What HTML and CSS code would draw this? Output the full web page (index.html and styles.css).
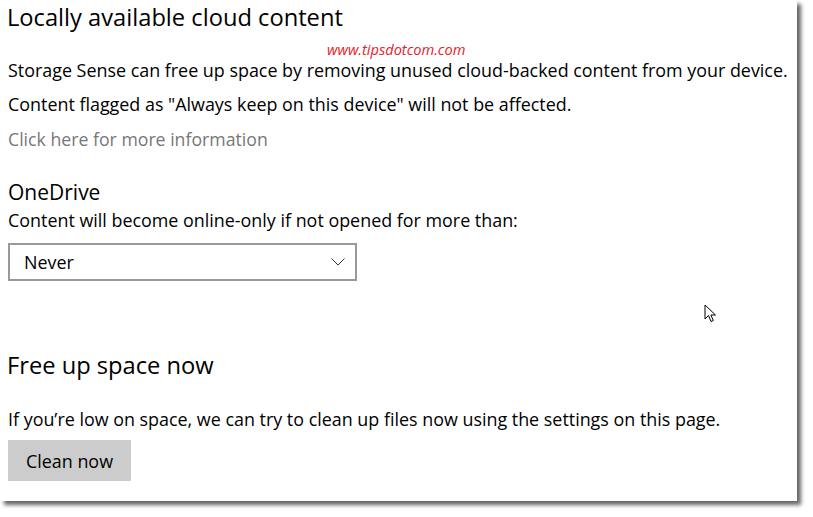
FILE: index.html
```html
<!DOCTYPE html>
<html lang="en">
<head>
<meta charset="utf-8">
<title>Storage Sense</title>
<link rel="stylesheet" href="styles.css">
</head>
<body>
<div class="panel">
  <h2 class="title">Locally available cloud content</h2>
  <div class="watermark">www.tipsdotcom.com</div>
  <p class="text t1">Storage Sense can free up space by removing unused cloud-backed content from your device.</p>
  <p class="text t2">Content flagged as "Always keep on this device" will not be affected.</p>
  <a class="link">Click here for more information</a>
  <h3 class="sub">OneDrive</h3>
  <p class="text t3">Content will become online-only if not opened for more than:</p>
  <div class="select">
    <span class="select-value">Never</span>
    <svg class="chevron" width="14" height="8" viewBox="0 0 14 8"><path d="M0.5 0.5 L7 7 L13.5 0.5" fill="none" stroke="#333" stroke-width="1"/></svg>
  </div>
  <svg class="cursor" width="14" height="19" viewBox="0 0 14 19"><path d="M1 1 L1 15 L4.5 11.5 L7 17.5 L9.3 16.5 L6.9 11 L11.5 11 Z" fill="#fff" stroke="#000" stroke-width="1" stroke-linejoin="miter"/></svg>
  <h2 class="title t-free">Free up space now</h2>
  <p class="text t4">If you’re low on space, we can try to clean up files now using the settings on this page.</p>
  <button class="btn">Clean now</button>
</div>
</body>
</html>
```

FILE: styles.css
```css
html, body {
  margin: 0;
  padding: 0;
  background: #fff;
}
body {
  width: 813px;
  height: 517px;
  overflow: hidden;
  font-family: "Open Sans", "Noto Sans", sans-serif;
  color: #000;
}
.panel {
  position: relative;
  width: 797px;
  height: 501px;
  box-sizing: border-box;
  padding-left: 8px;
  background: #fff;
  box-shadow: 4px 4px 4px rgba(0, 0, 0, 0.6);
  display: flex;
  flex-direction: column;
  align-items: flex-start;
}
.title {
  margin: 0;
  padding-top: 1px;
  font-weight: 400;
  font-size: 23.7px;
  line-height: 32px;
  margin-left: -1px;
}
.watermark {
  margin: 9px 0 0 319px;
  font-size: 14.6px;
  line-height: 14px;
  font-style: italic;
  color: #e8202a;
}
.text {
  margin: 0;
  font-size: 17.9px;
  line-height: 20px;
}
.t1 { margin-top: 4px; }
.t2 { margin-top: 14px; }
.link {
  margin-top: 15px;
  font-size: 17.7px;
  line-height: 20px;
  color: #777;
}
.sub {
  margin: 30px 0 0;
  font-weight: 400;
  font-size: 21px;
  line-height: 26px;
}
.t3 { margin-top: 5px; }
.select {
  margin-top: 13px;
  width: 349px;
  height: 38px;
  box-sizing: border-box;
  border: 2px solid #999;
  display: flex;
  align-items: center;
  padding: 0 10px 0 14px;
}
.select-value {
  font-size: 17.9px;
  line-height: 20px;
  flex: 1;
}
.chevron { display: block; }
.cursor {
  position: absolute;
  left: 704px;
  top: 304px;
}
.t-free { margin-top: 67px; }
.t4 { margin-top: 28px; }
.btn {
  margin-top: 11px;
  width: 123px;
  height: 41px;
  border: 0;
  background: #ccc;
  font-family: inherit;
  font-size: 17.9px;
  line-height: 20px;
  color: #000;
  text-align: left;
  padding: 0 0 0 18px;
}
```
